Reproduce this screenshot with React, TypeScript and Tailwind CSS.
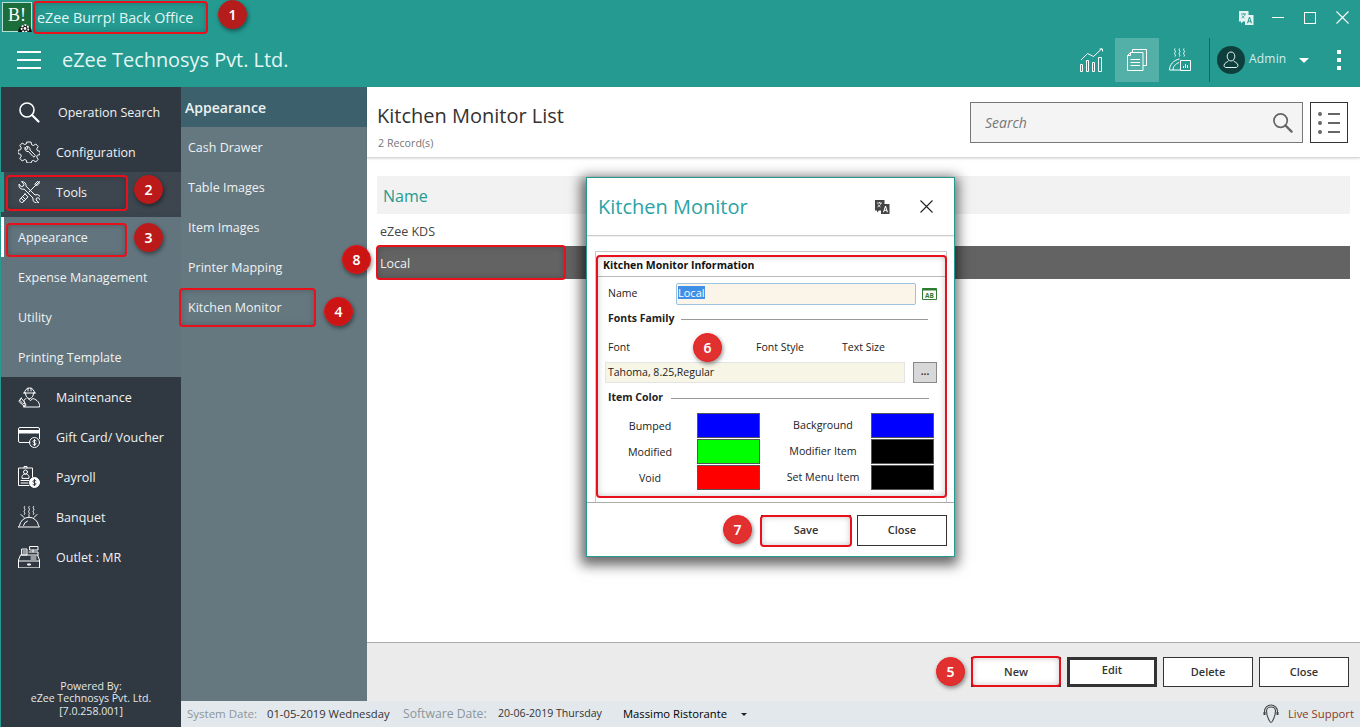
import type { ReactNode } from 'react';

const stroke = {
  fill: 'none',
  stroke: 'currentColor',
  strokeWidth: 1,
  strokeLinecap: 'round' as const,
  strokeLinejoin: 'round' as const,
};

function Icon({ size = 22, className = '', children }: { size?: number; className?: string; children: ReactNode }) {
  return (
    <svg width={size} height={size} viewBox="0 0 22 22" className={className} {...stroke}>
      {children}
    </svg>
  );
}

function SearchIcon({ size = 22, width = 1.6 }: { size?: number; width?: number }) {
  return (
    <Icon size={size}>
      <circle cx="9" cy="9" r="7" strokeWidth={width} />
      <path d="M14 14l6.5 6.5" strokeWidth={width + 0.6} />
    </Icon>
  );
}

function ConfigIcon() {
  return (
    <Icon>
      <path d="M9 1h4l.6 2.7 1.8.8L17.8 3l2.4 2.6-1.5 2.3.7 1.8L22 10.400v3.200l-2.600.6-.7 1.800 1.500 2.300-2.400 2.600-2.400-1.500-1.800.8L13 22H9l-.6-2.700-1.800-.8L4.200 20l-2.400-2.600 1.500-2.300-.7-1.800L0 12.600v-3.200l2.600-.7.7-1.800L1.800 4.600 4.200 2l2.400 1.500 1.800-.8z" />
      <path d="M7 6.500a3 3 0 0 0 3.500 4l4.500 5a1.200 1.200 0 0 0 1.800-1.700l-4.800-4.700A3 3 0 0 0 8.500 5.500l1.500 2-1.300 1z" />
    </Icon>
  );
}

function ToolsIcon() {
  return (
    <Icon>
      <path d="M21.500 .5 11 11M20 .5l1.500 1.500-3 3-1.500-1.500z" />
      <path d="M7 13 2 18.200a2.200 2.200 0 0 0 3 3L10 15.800 7 13zM3.500 17.500l2 2M5 16l2 2" />
      <path d="M1 3.500a4 4 0 0 0 5.200 4.600L15 17a4 4 0 0 0 5.800 4.500l-2.800-2.500.6-1.800 1.800-.5 2 2.500A4 4 0 0 0 17 14L8 5.200A4 4 0 0 0 3.500 .6L6 3.200 5.400 5l-1.800.6z" />
    </Icon>
  );
}

function MaintenanceIcon() {
  return (
    <Icon>
      <path d="M6.500 7a5 5 0 0 1 10 0M5.500 7h12M7.500 7c0 3 1.500 5.500 4 5.500s4-2.500 4-5.500" />
      <path d="M10 2v3M13 2v3" />
      <path d="M8 12.500C4 14 7 17 8 19c-2 .5-4 2-2 2h15.500c.5-4-2-7-6.500-8.500l-2.500 2-2.500-2" />
      <path d="M1 15.500l5.500 5M2.500 13.500 1.200 15M6.500 20.500 8 19.500M3.500 12a2 2 0 0 0-1.500 2.500l3 3 2 .5-.5-2-3-3.500z" />
    </Icon>
  );
}

function GiftIcon() {
  return (
    <Icon>
      <path d="M12 16.500H2a1.500 1.500 0 0 1-1.500-1.500V3A1.500 1.500 0 0 1 2 1.500h18A1.500 1.500 0 0 1 21.500 3v9.500" />
      <path d="M.5 4.500h21v2.500H.5z" fill="currentColor" />
      <circle cx="16.500" cy="16.500" r="5" />
      <path d="M18 14.800c-1-.8-3-.6-3 .8s3 .8 3 2.200-2 1.500-3 .7M16.500 13.500v6" />
    </Icon>
  );
}

function PayrollIcon() {
  return (
    <Icon>
      <path d="M11 19.500H.5V2h14v9M6 2V.5h3V2" />
      <circle cx="7.500" cy="6" r="2" />
      <path d="M4 12v-1.500c0-1.500 2-2.500 3.500-2.500s3.500 1 3.500 2.500V12zM3 14.500h8M3 17h7" />
      <circle cx="16.500" cy="16.500" r="5" fill="currentColor" />
      <path d="M18 14.800c-1-.8-3-.6-3 .8s3 .8 3 2.200-2 1.500-3 .7M16.500 13.500v6" stroke="#303841" />
    </Icon>
  );
}

function BanquetIcon() {
  return (
    <Icon>
      <path d="M6.500 .5c-1.500 1.500 1.500 2.500 0 4s1.500 2.500 0 4M11 .5c-1.500 1.500 1.500 2.500 0 4s1.500 2.500 0 4M15.500 .5c-1.500 1.500 1.500 2.500 0 4s1.500 2.500 0 4" />
      <path d="M.5 21h21l-1-1.500a9.600 9.600 0 0 0-19 0zM11 10.500v-1M5.500 19.500a6 6 0 0 1 4-4.500" />
      <path d="M3 8.500 6 11.500M19 8.500 16 11.500" />
    </Icon>
  );
}

function RegisterIcon() {
  return (
    <Icon>
      <path d="M.5 21.500V14l2-5h17l2 5v7.500zM.5 15h21" />
      <path d="M4 3h5v6H4zM12 .5h8v3.500h-8zM15 4v2M11 6h9v3" />
      <path d="M5 5h3M5 7h3M13 11h5M13 13h5" />
      <path d="M10 18.500h2" strokeWidth={2} />
    </Icon>
  );
}

function TranslateIcon({ box, letter }: { box: string; letter: string }) {
  return (
    <svg width="16" height="16" viewBox="0 0 16 16">
      <path d="M1 1h9.500v10.500H5L3 13.500V11.500H1z" fill={box} />
      <path d="M7 5h8.500v10H7z" fill={box} />
      <path d="M9 13.200 11 7h1l2 6.200h-1.200l-.4-1.400h-1.900l-.4 1.400zM10.800 10.800h1.400L11.500 8.500z" fill={letter} />
      <path d="M3 4h5M5.500 3v1M7 4c-.5 2-2 3.500-3.500 4M4 5.500c.5 1 1.500 2 2.500 2.500" fill="none" stroke={letter} strokeWidth="0.8" />
    </svg>
  );
}

function CloseX({ className = '' }: { className?: string }) {
  return (
    <svg width="13" height="13" viewBox="0 0 13 13" className={className} fill="none" stroke="currentColor" strokeWidth="1.1">
      <path d="M.5.5l12 12M12.500.5l-12 12" />
    </svg>
  );
}

function TitleBar() {
  return (
    <div className="flex h-[35px] items-center">
      <div className="relative mb-[2px] ml-[2px] flex h-[30px] w-[30px] items-center justify-center border border-[#b9e0d5] bg-[#1c6d3c] pb-1 font-['Liberation_Serif',serif] text-[18px] leading-none text-white">
        B!
        <svg width="14" height="10" viewBox="0 0 14 10" className="absolute -right-px -bottom-px">
          <path d="M0 10a7 7 0 0 1 14 0z" fill="#111" />
          <circle cx="7" cy="6.500" r="3.400" fill="#111" stroke="#fff" strokeWidth="1.800" strokeDasharray="2 1" />
          <circle cx="7" cy="6.500" r="1.400" fill="#fff" />
        </svg>
      </div>
      <span className="ml-[5px] text-[14.300px] text-[#e4f6f4]">eZee Burrp! Back Office</span>
      <div className="ml-auto flex items-center text-white">
        <TranslateIcon box="#e4f4f2" letter="#249a91" />
        <span className="ml-[18px] h-px w-[12px] bg-white" />
        <span className="ml-[20px] h-[12px] w-[12px] border border-white" />
        <CloseX className="mr-[11px] ml-[20px]" />
      </div>
    </div>
  );
}

function HeaderBar() {
  return (
    <div className="flex h-[52px] items-center text-white">
      <div className="mb-[2px] ml-[17px] flex w-[24px] flex-col gap-[6px]">
        <span className="h-[2px] bg-white" />
        <span className="h-[2px] bg-white" />
        <span className="h-[2px] bg-white" />
      </div>
      <span className="mb-[2px] ml-[21px] text-[19.900px] text-[#e4f6f4]">eZee Technosys Pvt. Ltd.</span>
      <div className="mb-[2px] ml-auto flex h-[44px] items-center">
        <svg width="24" height="24" viewBox="0 0 24 24" fill="none" stroke="currentColor">
          <path d="M.5 16.500h2v7h-2zM6.500 12.500h2v11h-2zM12.500 14.500h2v9h-2zM18.500 9.500h3v14h-3z" />
          <path d="M1 12 7.500 5.500l6 3L22 .5M19.500 1H22.500V3.500" />
        </svg>
        <div className="ml-[11px] flex h-[44px] w-[44px] items-center justify-center bg-[#52b0a9]">
          <svg width="20" height="22" viewBox="0 0 20 22" fill="none" stroke="currentColor">
            <path d="M5.500 3V.5h14v16H16" />
            <path d="M3.500 3.500h12.500v18H.5v-15zM3.500 3.500v3h-3M3.500 10.500h9.500M3.500 13.500h9.500M3.500 16.500h9.500" />
          </svg>
        </div>
        <svg width="22" height="24" viewBox="0 0 22 24" className="ml-[10px]" fill="none" stroke="currentColor">
          <path d="M6 .5c-1.500 1.500 1.500 2.500 0 4s1.500 2.500 0 4M10.500 .5c-1.500 1.500 1.500 2.500 0 4s1.500 2.500 0 4M15 .5c-1.500 1.500 1.500 2.500 0 4s1.500 2.500 0 4" />
          <path d="M.5 22c0-5 4-10 10-11M4 22c0-3 2-6 6-7.500" />
          <path d="M11.500 12.500h10v10h-10zM14.500 20v-2M16.500 20v-4M18.500 20v-3" />
          <path d="M.5 22h11" />
        </svg>
        <span className="ml-[18px] h-[44px] w-px bg-[#2d5a62]" />
        <div className="ml-[7px] flex h-[28px] w-[28px] items-center justify-center rounded-full bg-[#0f3f3d]">
          <svg width="16" height="18" viewBox="0 0 16 18" fill="none" stroke="#e4f6f4">
            <path d="M8 1c-2.500 0-3.800 2-3.800 4.200S5.500 10 8 10s3.800-2.600 3.800-4.800S10.500 1 8 1zM5.500 9.500c0 1.500-4.500 2-4.500 5 0 1 1 2 2 2h10c1 0 2-1 2-2 0-3-4.500-3.500-4.500-5" />
          </svg>
        </div>
        <span className="mb-[2px] ml-[4px] w-[50px] text-[12px] tracking-[0.2px] text-[#d4eeec]">Admin</span>
        <span className="border-x-[5px] border-t-[5px] border-x-transparent border-t-white" />
        <div className="mr-[19px] ml-[28px] flex flex-col gap-[4px]">
          <span className="h-[4px] w-[4px] bg-white" />
          <span className="h-[4px] w-[4px] bg-white" />
          <span className="h-[4px] w-[4px] bg-white" />
        </div>
      </div>
    </div>
  );
}

function NavItem({ icon, label, textClass = 'ml-[16px]' }: { icon: ReactNode; label: string; textClass?: string }) {
  return (
    <div className="flex h-[40px] items-center pl-[16px] text-white">
      <span className="flex w-[23px] justify-center">{icon}</span>
      <span className={`${textClass} pt-[2px] text-[12.500px] text-[#eef2f4]`}>{label}</span>
    </div>
  );
}

function Sidebar() {
  const subItems = ['Expense Management', 'Utility', 'Printing Template'];
  const lowerItems = [
    { label: 'Maintenance', icon: <MaintenanceIcon /> },
    { label: 'Gift Card/ Voucher', icon: <GiftIcon /> },
    { label: 'Payroll', icon: <PayrollIcon /> },
    { label: 'Banquet', icon: <BanquetIcon /> },
    { label: 'Outlet : MR', icon: <RegisterIcon /> },
  ];

  return (
    <aside className="flex w-[181px] flex-col border-l border-[#249a91] bg-[#303841]">
      <div className="h-[5px]" />
      <NavItem icon={<SearchIcon />} label="Operation Search" textClass="ml-[18px]" />
      <NavItem icon={<ConfigIcon />} label="Configuration" />
      <div className="-ml-px border-l-[4px] border-[#249a91] bg-[#3d464f]">
        <div className="-ml-[3px]">
          <NavItem icon={<ToolsIcon />} label="Tools" />
        </div>
      </div>
      <div className="h-[5px] bg-[#3a444c]" />
      <div className="bg-[#62747d]">
        <div className="flex h-[40px] items-center border-l-[3px] border-white pt-[2px] pl-[14px] text-[12.500px] text-[#eef2f4]">
          Appearance
        </div>
        {subItems.map((item) => (
          <div key={item} className="flex h-[40px] items-center pt-[2px] pl-[17px] text-[12.500px] text-[#eef2f4]">
            {item}
          </div>
        ))}
      </div>
      {lowerItems.map((item) => (
        <NavItem key={item.label} icon={item.icon} label={item.label} />
      ))}
      <div className="mt-auto pb-[10px] text-center text-[10.600px] leading-[12.500px] text-[#e4e8ea]">
        <p>Powered By:</p>
        <p>eZee Technosys Pvt. Ltd.</p>
        <p>[7.0.258.001]</p>
      </div>
    </aside>
  );
}

function SubMenu() {
  const items = ['Cash Drawer', 'Table Images', 'Item Images', 'Printer Mapping', 'Kitchen Monitor'];
  return (
    <div className="flex w-[186px] flex-col bg-[#65777f]">
      <div className="flex h-[40px] items-center bg-[#3c616c] pl-[4px] text-[14px] font-semibold text-[#eef2f4]">
        Appearance
      </div>
      {items.map((item) => (
        <div key={item} className="flex h-[40px] items-center pt-[2px] pl-[7px] text-[12.500px] text-[#eef2f4]">
          {item}
        </div>
      ))}
    </div>
  );
}

function ActionButton({ label, className = '' }: { label: string; className?: string }) {
  return (
    <button className={`flex w-[90px] items-center justify-center border border-[#333] bg-white text-[11px] font-semibold text-[#333] ${className}`}>
      {label}
    </button>
  );
}

function MainPanel() {
  return (
    <div className="flex flex-1 flex-col bg-white">
      <div className="flex h-[71px] items-start border-b border-[#d8d8d8] shadow-[0_1px_2px_rgba(0,0,0,0.12)]">
        <div className="pt-[14px] pl-[10px]">
          <h1 className="text-[20px] leading-[30px] text-[#333]">Kitchen Monitor List</h1>
          <p className="mt-[5px] pl-px text-[10.700px] leading-[14px] text-[#777]">2 Record(s)</p>
        </div>
        <div className="mt-[15px] ml-auto flex gap-[7px] pr-[12px]">
          <div className="flex h-[41px] w-[333px] items-center justify-between border border-[#777] bg-[#f4f4f4] pr-[9px] pl-[14px] text-[14px] text-[#777] italic">
            Search
            <span className="text-[#666]">
              <SearchIcon size={21} width={1.8} />
            </span>
          </div>
          <div className="flex h-[41px] w-[38px] flex-col justify-center gap-[5px] border border-[#333] px-[7px]">
            {[0, 1, 2].map((row) => (
              <div key={row} className="flex items-center gap-[6px]">
                <span className="h-[4px] w-[4px] rounded-full bg-[#666]" />
                <span className="h-[2px] flex-1 bg-[#666]" />
              </div>
            ))}
          </div>
        </div>
      </div>
      <div className="flex-1 pt-[18px] pr-[10px] pl-[10px]">
        <div className="flex h-[38px] items-center bg-[#f2f2f2] pt-[2px] pl-[6px] text-[16px] text-[#249a91]">Name</div>
        <div className="flex h-[32px] items-center pt-[4px] pl-[3px] text-[12.500px] text-[#444]">eZee KDS</div>
        <div className="flex h-[33px] items-center bg-[#636363] pt-[4px] pl-[3px] text-[12.500px] text-[#f0f0f0]">Local</div>
      </div>
      <div className="flex h-[59px] items-start justify-end gap-[6px] border-t border-[#aaa] bg-[#ebebeb] pt-[14px] pr-[11px]">
        <ActionButton label="New" className="h-[30px]" />
        <ActionButton label="Edit" className="h-[30px] border-[3px] pb-[3px]" />
        <ActionButton label="Delete" className="h-[30px]" />
        <ActionButton label="Close" className="h-[30px]" />
      </div>
    </div>
  );
}

function StatusBar() {
  return (
    <div className="flex h-[26px] items-center bg-[#e3e8ec] pr-[6px] pl-[6px] text-[11.250px] text-[#333]">
      <span className="w-[80px] text-[11.500px] text-[#8a969c]">System Date:</span>
      <span className="w-[136px]">01-05-2019 Wednesday</span>
      <span className="w-[95px] text-[12.200px] text-[#8a969c]">Software Date:</span>
      <span className="w-[125px] text-[10.600px]">20-06-2019 Thursday</span>
      <span className="text-[11.250px] text-black">Massimo Ristorante</span>
      <span className="ml-[14px] border-x-[3px] border-t-[3px] border-x-transparent border-t-[#222]" />
      <div className="ml-auto flex items-center gap-[9px] text-[11.300px] text-[#8a3a22]">
        <svg width="16" height="20" viewBox="0 0 16 20" fill="none" stroke="#444" strokeWidth="1.100">
          <path d="M1.500 10V7.500a6.500 6.500 0 0 1 13 0V10" />
          <path d="M3.500 7c0-2.500 2-4 4.500-4s4.500 1.500 4.500 4-1 6-2 8-1.500 3.500-2.500 3.500-1.500-1.500-2.500-3.500-2-5.500-2-8z" />
          <path d="M1.500 8v3M14.500 8v3" strokeWidth="2" />
        </svg>
        Live Support
      </div>
    </div>
  );
}

function Swatch({ className }: { className: string }) {
  return <span className={`h-[25px] w-[63px] border border-[#555] ${className}`} />;
}

function ColorRow({ label, swatch, labelClass = '' }: { label: string; swatch: string; labelClass?: string }) {
  return (
    <div className="flex items-center">
      <span className={`flex-1 text-center text-[10.700px] text-[#222] ${labelClass}`}>{label}</span>
      <Swatch className={swatch} />
    </div>
  );
}

function SectionHeading({ label, lineClass }: { label: string; lineClass: string }) {
  return (
    <div className="flex h-[14px] items-center">
      <span className="text-[10.500px] font-bold text-[#222]">{label}</span>
      <span className={`h-px bg-[#999] ${lineClass}`} />
    </div>
  );
}

function KitchenMonitorModal() {
  return (
    <div className="absolute top-[177px] left-[586px] flex h-[380px] w-[369px] flex-col border border-[#249a91] bg-white shadow-[-1px_4px_12px_4px_rgba(0,0,0,0.6)]">
      <div className="flex h-[58px] items-center border-b border-[#ccc] pl-[11px] shadow-[0_1px_1px_rgba(0,0,0,0.05)]">
        <span className="text-[20px] text-[#2aa3a5]">Kitchen Monitor</span>
        <span className="ml-auto">
          <TranslateIcon box="#444" letter="#fff" />
        </span>
        <CloseX className="mr-[21px] ml-[30px] text-[#222]" />
      </div>
      <div className="mr-[7px] ml-[8px] mt-[15px] h-[251px] border-x border-t border-[#c8c8c8] px-px">
        <div className="mt-[4px] flex h-[21px] items-center border-b border-[#bbb] pl-[6px] text-[10.500px] font-bold text-[#111]">
          Kitchen Monitor Information
        </div>
        <div className="flex h-[34px] items-center pl-[11px]">
          <span className="w-[68px] text-[10.500px] text-[#222]">Name</span>
          <div className="flex h-[22px] w-[240px] items-center rounded-[2px] border border-[#9cc3e0] bg-[#faf5e8] pb-[3px] pl-px">
            <span className="bg-[#3f8fe8] text-[11px] leading-[13px] text-white">Local</span>
          </div>
          <svg width="15" height="12" viewBox="0 0 15 12" className="ml-[6px]">
            <path d="M.5.500h14v11H.5z" fill="#fff" stroke="#2f7d32" />
            <path d="M.5.500h14v2H.5z" fill="#2f7d32" />
            <text x="7.500" y="9.800" textAnchor="middle" fontSize="6.500" fontWeight="700" fill="#2f7d32">AB</text>
          </svg>
        </div>
        <div className="mt-px pl-[11px]">
          <SectionHeading label="Fonts Family" lineClass="ml-[7px] w-[247px]" />
        </div>
        <div className="mt-[15px] flex h-[14px] items-center pl-[11px] text-[10.500px] text-[#222]">
          <span className="w-[148px]">Font</span>
          <span className="w-[86px]">Font Style</span>
          <span>Text Size</span>
        </div>
        <div className="mt-[7px] flex items-center pl-[8px]">
          <div className="flex h-[21px] w-[300px] items-center border border-[#e4e4e4] bg-[#f7f5e5] pl-[2px] text-[10.500px] text-[#222]">
            Tahoma, 8.25,Regular
          </div>
          <div className="ml-[8px] flex h-[21px] w-[24px] items-center justify-center border border-[#888] bg-[#d8d8d8] pb-[4px] text-[10px] leading-none font-bold text-[#333]">
            ...
          </div>
        </div>
        <div className="mt-[8px] pl-[11px]">
          <SectionHeading label="Item Color" lineClass="ml-[8px] w-[258px]" />
        </div>
        <div className="mt-[8px] grid grid-cols-[153px_153px] gap-x-[21px] gap-y-px pl-[10px]">
          <ColorRow label="Bumped" swatch="bg-[#0000ff]" labelClass="pt-[1px] pr-[4px]" />
          <ColorRow label="Background" swatch="bg-[#0000ff]" labelClass="pr-[6px]" />
          <ColorRow label="Modified" swatch="bg-[#00ff00]" labelClass="pt-[1px] pr-[4px]" />
          <ColorRow label="Modifier Item" swatch="bg-black" labelClass="pr-[6px]" />
          <ColorRow label="Void" swatch="bg-[#ff0000]" labelClass="pt-[1px] pr-[4px]" />
          <ColorRow label="Set Menu Item" swatch="bg-black" labelClass="pr-[6px]" />
        </div>
      </div>
      <div className="flex flex-1 items-start justify-end gap-[6px] border-t border-[#aaa] pt-[12px] pr-[7px]">
        <ActionButton label="Save" className="h-[31px]" />
        <ActionButton label="Close" className="h-[31px]" />
      </div>
    </div>
  );
}

function Badge({ n, className }: { n: number; className: string }) {
  return (
    <span className={`absolute flex h-[29px] w-[29px] items-center justify-center rounded-full border font-['Noto_Sans',sans-serif] text-[14px] font-semibold text-white shadow-[1px_2px_4px_rgba(0,0,0,0.45)] ${className}`}>
      {n}
    </span>
  );
}

function Callout({ className }: { className: string }) {
  return (
    <span className={`absolute rounded-[4px] border-2 border-[#e8101a] shadow-[inset_0_0_6px_rgba(0,0,0,0.22)] ${className}`} />
  );
}

export default function App() {
  return (
    <div className="relative flex h-[727px] w-[1360px] flex-col overflow-hidden bg-white font-['Open_Sans',sans-serif]">
      <header className="bg-[#249a91]">
        <TitleBar />
        <HeaderBar />
      </header>
      <div className="flex flex-1">
        <Sidebar />
        <div className="flex flex-1 flex-col">
          <div className="flex flex-1">
            <SubMenu />
            <MainPanel />
          </div>
          <StatusBar />
        </div>
      </div>

      <KitchenMonitorModal />

      {/* annotations laid over the screen */}
      <Callout className="top-[1px] left-[33px] h-[33px] w-[175px]" />
      <Callout className="top-[175px] left-[6px] h-[36px] w-[122px]" />
      <Callout className="top-[223px] left-[6px] h-[34px] w-[121px]" />
      <Callout className="top-[288px] left-[179px] h-[39px] w-[137px]" />
      <Callout className="top-[245px] left-[376px] h-[35px] w-[190px]" />
      <Callout className="top-[255px] left-[596px] h-[243px] w-[351px]" />
      <Callout className="top-[515px] left-[760px] h-[32px] w-[92px]" />
      <Callout className="top-[656px] left-[971px] h-[31px] w-[90px]" />

      <Badge n={1} className="top-[0px] left-[218px] border-[#c41818] bg-[#b51c1c]" />
      <Badge n={2} className="top-[175px] left-[134px] border-[#c41818] bg-[#bb1a1a]" />
      <Badge n={3} className="top-[223px] left-[134px] border-[#c41818] bg-[#bb1a1a]" />
      <Badge n={4} className="top-[297px] left-[324px] border-[#e01818] bg-[#cc1414]" />
      <Badge n={8} className="top-[245px] left-[342px] border-[#e01818] bg-[#cc1414]" />
      <Badge n={6} className="top-[333px] left-[693px] border-[#f01c1c] bg-[#e03030]" />
      <Badge n={7} className="top-[515px] left-[723px] border-[#f01c1c] bg-[#e03030]" />
      <Badge n={5} className="top-[657px] left-[936px] border-[#f01c1c] bg-[#e03030]" />
    </div>
  );
}
